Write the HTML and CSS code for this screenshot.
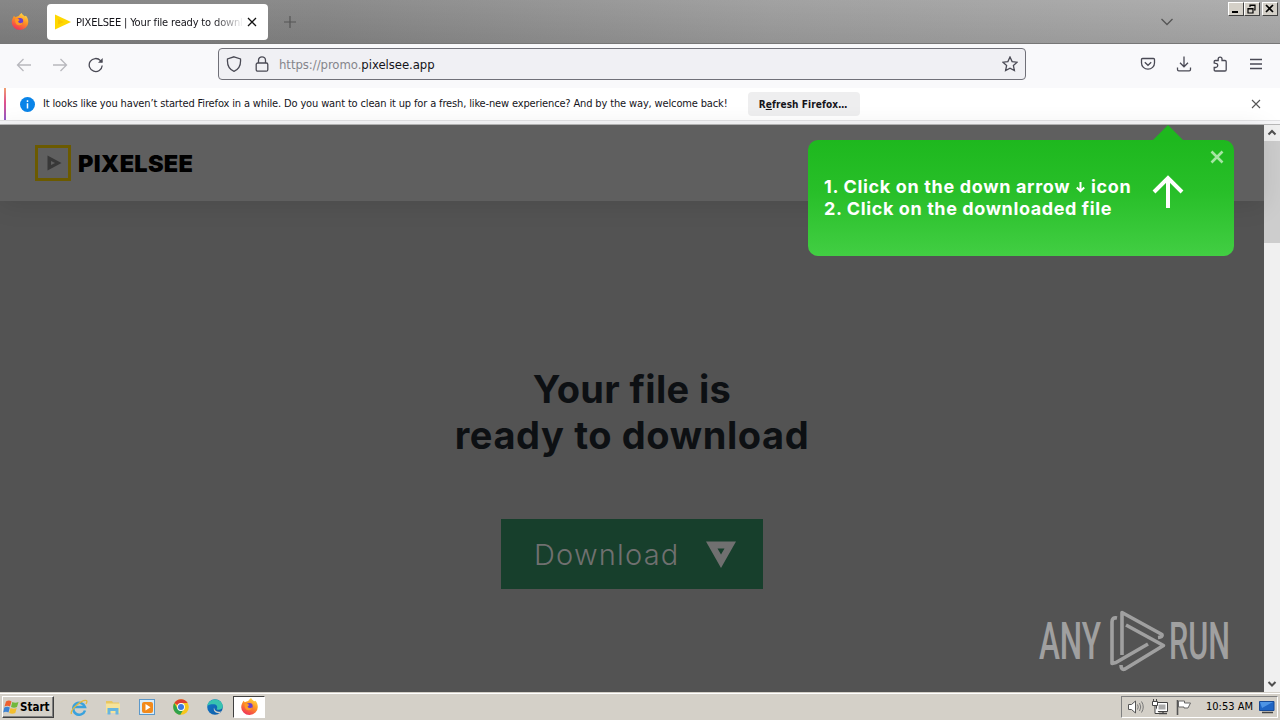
FILE: index.html
```html
<!DOCTYPE html>
<html lang="en">
<head>
  <meta charset="UTF-8">
  <title>PIXELSEE | Your file ready to download</title>
  <link rel="stylesheet" href="styles.css">
</head>
<body>

  <svg class="defs" width="0" height="0">
    <defs>
      <linearGradient id="foxBody" x1="0.8" y1="0" x2="0.3" y2="1">
        <stop offset="0" stop-color="#ffe04a"/>
        <stop offset="0.45" stop-color="#ff9422"/>
        <stop offset="1" stop-color="#f0305a"/>
      </linearGradient>
      <linearGradient id="edgeBody" x1="0" y1="0" x2="1" y2="1">
        <stop offset="0" stop-color="#1479c9"/>
        <stop offset="1" stop-color="#0c59a4"/>
      </linearGradient>
      <symbol id="firefox" viewBox="0 0 16 16">
        <path fill="url(#foxBody)" d="M1 5.2 2.3 2.6 3.6 4 5.2 3.4C6.6 3.2 7.4 2.6 8.2 1c.8-.6 1.2-.8 1.4-1 .4 1.4 1.6 2 2.8 3l1.2-.4c1.4 1.6 2.2 3.6 2.2 5.8A7.8 7.5 0 0 1 .2 8.600C.2 7.200.5 6.200 1 5.200z"/>
        <circle cx="8" cy="7.600" r="3" fill="#6a3fd0"/>
        <path fill="#ff9a24" d="M3.400 5.600C5 5 6.600 5.400 7.800 6.600L6.200 8c.6 1.800 3 2 4.600.8-.6 2.200-2.600 3.200-4.600 2.600C4.200 10.800 3 8.600 3.400 5.600z"/>
      </symbol>
    </defs>
  </svg>

  <!-- Tab strip -->
  <div class="tabstrip">
    <svg class="view-icon" width="18" height="17"><use href="#firefox"/></svg>
    <div class="tab">
      <svg width="16" height="16" viewBox="0 0 16 16"><path d="M0 .5 16 8 0 15.500z" fill="#ffd800"/><path d="M3 5l6 3-6 2.500z" fill="#fbc600"/></svg>
      <span class="tab-title">PIXELSEE | Your file ready to downl</span>
      <svg class="tab-close" width="10" height="10" viewBox="0 0 10 10"><path d="M1 1l8 8M9 1l-8 8" stroke="#111" stroke-width="1.300"/></svg>
    </div>
    <svg class="new-tab" width="12" height="12" viewBox="0 0 12 12"><path d="M6 0v12M0 6h12" stroke="#555" stroke-width="1.200"/></svg>
    <svg class="all-tabs" width="14" height="8" viewBox="0 0 14 8"><path d="M1.500 1l5.500 5.500L12.500 1" fill="none" stroke="#555" stroke-width="1.300"/></svg>
    <div class="window-buttons">
      <div class="winbtn"><svg width="10" height="10" viewBox="0 0 10 10"><path d="M1 8h6" stroke="#000" stroke-width="2"/></svg></div>
      <div class="winbtn"><svg width="10" height="10" viewBox="0 0 10 10"><path d="M3 3V1h5v5H7M3 1.500h5M1 4.500h5V9H1zM1 5h5" fill="none" stroke="#000" stroke-width="1.200"/></svg></div>
      <div class="winbtn close"><svg width="10" height="10" viewBox="0 0 10 10"><path d="M1 1l7 7M8 1L1 8" stroke="#000" stroke-width="1.700"/></svg></div>
    </div>
  </div>

  <!-- Toolbar -->
  <div class="toolbar">
    <div class="nav">
      <svg width="16" height="16" viewBox="0 0 16 16" class="dim"><path d="M15 8H1.500M7.500 2l-6 6 6 6"/></svg>
      <svg width="16" height="16" viewBox="0 0 16 16" class="dim"><path d="M1 8h13.500M8.500 2l6 6-6 6"/></svg>
      <svg width="16" height="16" viewBox="0 0 16 16"><path d="M14.200 8.500A6.500 6.500 0 1 1 12.500 3.600L14 5"/><path d="M14.700 1v4.800H10z" fill="#4a4a55" stroke="none"/></svg>
    </div>
    <div class="urlbar">
      <svg width="16" height="16" viewBox="0 0 16 16"><path d="M8 .8 14.500 3C15 9 12.500 13.500 8 15.300 3.500 13.500 1 9 1.500 3z"/></svg>
      <svg class="lock" width="14" height="16" viewBox="0 0 14 16"><rect x="1.200" y="7" width="11.600" height="8.200" rx="1.500"/><path d="M3.500 7V4.300a3.500 3.500 0 0 1 7 0V7"/></svg>
      <span class="url">https://promo.<b>pixelsee.app</b></span>
      <svg class="star" width="16" height="16" viewBox="0 0 16 16"><path d="M8 1l2.100 4.600 5 .6-3.700 3.400 1 5L8 12.200l-4.400 2.400 1-5L.9 6.200l5-.6z"/></svg>
    </div>
    <div class="actions">
      <svg width="16" height="16" viewBox="0 0 16 16"><path d="M2.500 2.500h11a1 1 0 0 1 1 1V7a6.500 6.200 0 0 1-13 0V3.500a1 1 0 0 1 1-1z"/><path d="M4.800 6.300 8 9.300l3.200-3"/></svg>
      <svg width="16" height="16" viewBox="0 0 16 16"><path d="M8 .5v10M4 6.800l4 4 4-4M1.500 11.500v2q0 1.300 1.300 1.300h10.400q1.300 0 1.300-1.300v-2"/></svg>
      <svg width="16" height="16" viewBox="0 0 16 16"><path d="M2.200 7V5.500q0-1 1-1h3V3a1.900 1.900 0 0 1 3.800 0v1.500h3q1.200 0 1.200 1.200v8q0 1.300-1.200 1.300H3.400q-1.200 0-1.200-1.200V11.500h1.400a2.100 2.100 0 0 0 0-4.200z"/></svg>
      <svg width="16" height="16" viewBox="0 0 16 16"><path d="M2 3.500h12M2 8h12M2 12.500h12"/></svg>
    </div>
  </div>

  <!-- Notification bar -->
  <div class="notification">
    <svg class="info" width="15" height="15" viewBox="0 0 15 15"><circle cx="7.500" cy="7.500" r="7.500" fill="#0a84e8"/><path d="M7.500 3.300v1.600M7.500 6.200v5.300" stroke="#fff" stroke-width="1.500"/></svg>
    <span class="message">It looks like you haven’t started Firefox in a while. Do you want to clean it up for a fresh, like-new experience? And by the way, welcome back!</span>
    <span class="refresh">R<u>e</u>fresh Firefox…</span>
    <svg class="dismiss" width="10" height="10" viewBox="0 0 10 10"><path d="M1 1l8 8M9 1L1 9" stroke="#555" stroke-width="1.100"/></svg>
  </div>

  <!-- Page -->
  <div class="viewport">
    <div class="page">
      <div class="site-header">
        <svg width="36" height="36" viewBox="0 0 36 36"><rect x="1.500" y="1.500" width="33" height="33" fill="none" stroke="#6b5a00" stroke-width="3"/><path d="M12.500 10.500v15L26.500 18zM16 16l4 2-4 2z" fill="#383838" fill-rule="evenodd"/></svg>
        <span class="brand">PIXELSEE</span>
      </div>
      <div class="hero">
        <h1><span class="line-one">Your file is</span><br>ready to download</h1>
        <div class="download">
          <span>Download</span>
          <svg width="30" height="27" viewBox="0 0 30 27"><path d="M0 .5h30L15 27zM11.500 7.500l3.500 6 3.500-6z" fill="#707070" fill-rule="evenodd"/></svg>
        </div>
      </div>

      <div class="hint">
        <div class="hint-text"><span class="step-one">1. Click on the down arrow <svg width="9" height="11" viewBox="0 0 9 11"><path d="M4.500 0v9M.8 5.500l3.700 3.700 3.700-3.700" fill="none" stroke="#fff" stroke-width="2"/></svg> icon</span><br>2. Click on the downloaded file</div>
        <svg class="hint-arrow" width="32" height="34" viewBox="0 0 32 34"><path d="M16 33V3M2 17 16 3l14 14" fill="none" stroke="#fff" stroke-width="4"/></svg>
        <svg class="hint-close" width="14" height="14" viewBox="0 0 14 14"><path d="M1.500 1.500l11 11M12.500 1.500l-11 11" stroke="#a5e6a3" stroke-width="2.600"/></svg>
      </div>

      <svg class="watermark" width="212" height="72" viewBox="0 0 212 72">
        <text x="2" y="50" textLength="62" lengthAdjust="spacingAndGlyphs">ANY</text>
        <text x="132" y="50" textLength="61" lengthAdjust="spacingAndGlyphs">RUN</text>
        <g fill="none" stroke="#a0a0a0" stroke-width="3.600" stroke-linejoin="round">
          <path d="M80 9q-5-1-5 4v41.500l4-1L111 35"/>
          <path d="M85 46V3.500L125 25.500q1 2.500-4 3"/>
          <path d="M89 16l37.500 20.500L88 60q-4 1.500-4-4"/>
        </g>
      </svg>
    </div>

    <div class="scrollbar">
      <svg width="16" height="16" viewBox="0 0 16 16"><path d="M4.500 9.500 8 6l3.500 3.500" fill="none" stroke="#505050" stroke-width="2"/></svg>
      <div class="thumb"></div>
      <svg width="16" height="16" viewBox="0 0 16 16"><path d="M4.500 6 8 9.500 11.500 6" fill="none" stroke="#505050" stroke-width="2"/></svg>
    </div>
  </div>

  <!-- Taskbar -->
  <div class="taskbar">
    <div class="start">
      <svg width="17" height="16" viewBox="0 0 17 16">
        <path d="M3 2.500q3-2 5.500 0L7 7.500q-2.500-1.500-5.500 0z" fill="#ee6030"/>
        <path d="M9.300 3q3 1.500 6.200 0L14 8q-3 1.500-6 0z" fill="#72b83c"/>
        <path d="M1.300 8.500q3-1.500 5.500 0L5.500 13.500q-2.500-1.500-5.300 0z" fill="#3d83d3"/>
        <path d="M7.500 9q3 1.500 6.200 0l-1.400 5q-3 1.500-6.200 0z" fill="#f3be2f"/>
      </svg>
      <span>Start</span>
    </div>
    <div class="apps">
      <svg width="18" height="18" viewBox="0 0 18 18"><path d="M15 12.500A6 6 0 1 1 15 9H4" fill="none" stroke="#3aa2dd" stroke-width="2.500"/><path d="M1.500 16C-.5 12 12 1 16.500 2.500q1 1-.5 3.500" fill="none" stroke="#e4b93c" stroke-width="1.300"/></svg>
      <svg width="18" height="18" viewBox="0 0 18 18"><path d="M2 3h6l1 1.500h6V8H2z" fill="#e8c660"/><path d="M2 5.500h14V15H2z" fill="#f6e39a"/><path d="M3.500 16.500V10h11v6.500h-3V13h-5v3.500z" fill="#68b6df"/></svg>
      <svg width="18" height="18" viewBox="0 0 18 18"><rect x="1.500" y="1.500" width="15" height="15" fill="#d8ecfa" stroke="#5c98c9"/><rect x="4" y="4" width="11" height="11" rx="2" fill="#f28a1c"/><path d="M7.500 6v6.500L12.500 9.300z" fill="#fff"/></svg>
      <svg width="18" height="18" viewBox="0 0 18 18"><circle cx="9" cy="9" r="7.800" fill="#f7c61b"/><path d="M9 9 2.300 5A7.800 7.800 0 0 1 15.700 5H9z" fill="#dc3e32"/><path d="M2.300 5A7.800 7.800 0 0 0 8.300 16.800L12 10.500 9 9 5.600 10.700z" fill="#2fa24c"/><circle cx="9" cy="9" r="3.900" fill="#fff"/><circle cx="9" cy="9" r="3" fill="#3c79e0"/></svg>
      <svg width="18" height="18" viewBox="0 0 18 18"><circle cx="9" cy="9" r="7.800" fill="url(#edgeBody)"/><path d="M1.300 8C2.500-.5 15.500-1 16.800 8c0 3.500-3.500 4.500-6.300 3.200 1.600-2 .5-4.700-2.500-5C5 6 2.500 6.500 1.300 8z" fill="#37c3b0"/><path d="M8 9.500c.5 4 4.500 5 7.500 3.700-.7.9-1.500 1.600-2 2C9.500 15.500 7 13 8 9.500z" fill="#d4d0c8"/></svg>
      <div class="app-active"><svg width="17" height="17"><use href="#firefox"/></svg></div>
    </div>
    <div class="tray">
      <svg width="18" height="18" viewBox="0 0 18 18"><path d="M1.500 6.500h3L8.500 3v12L4.500 11.500h-3z" fill="#fff" stroke="#555"/><path d="M10.500 6.500q1.500 2.500 0 5M12.500 5q2.500 4 0 8M14.500 3.500q3.500 5.500 0 11" fill="none" stroke="#777"/></svg>
      <svg width="18" height="18" viewBox="0 0 18 18"><path d="M5.500 4.500h11v9h-11z" fill="#fff" stroke="#444"/><path d="M7.500 6.500h7v5h-7z" fill="#aaa"/><path d="M8 15.500h8M12 13.500v2" stroke="#444" stroke-width="1.300"/><path d="M1.500 3.500h5v4h-5zM4 8v7.500h4M2.500 1v2.500M5.500 1v2.500" fill="#fff" stroke="#444"/></svg>
      <svg width="18" height="18" viewBox="0 0 18 18"><path d="M2.500 2v15" stroke="#555" stroke-width="1.600"/><path d="M3.500 3h6v2h6l-2.500 5H9V9H3.500z" fill="#fff" stroke="#666"/></svg>
      <span class="clock">10:53 AM</span>
      <svg class="desktop" width="16" height="14" viewBox="0 0 16 14"><path d="M.5 1.500h14.500v9H.5z" fill="#1f65c4" stroke="#174a96"/><path d="M1 2h13L3 8z" fill="#4d94e5"/><path d="M3 12.500h11" stroke="#444" stroke-width="1.500"/></svg>
    </div>
  </div>

</body>
</html>
```
FILE: styles.css
```css
* {
  box-sizing: border-box;
}
body {
  margin: 0;
  width: 1280px;
  height: 720px;
  overflow: hidden;
  display: flex;
  flex-direction: column;
  font-family: "DejaVu Sans Condensed", "DejaVu Sans", sans-serif;
  font-stretch: condensed;
  font-size: 11px;
  color: #15141a;
  background: #f9f9fb;
}
svg {
  display: block;
  flex: none;
}
.defs {
  position: absolute;
}

/* tab strip */
.tabstrip {
  position: relative;
  flex: none;
  height: 44px;
  display: flex;
  align-items: center;
  padding-left: 11px;
  background: linear-gradient(rgba(255,255,255,0.06), rgba(0,0,0,0.06)), linear-gradient(90deg, #808080, #848484 25%, #9c9c9c 60%, #aaa);
  border-bottom: 1px solid #777;
}
.tab {
  width: 221px;
  height: 36px;
  margin-left: 18px;
  padding: 0 11px 0 8px;
  display: flex;
  align-items: center;
  background: #fff;
  border-radius: 4px;
}
.tab-title {
  width: 168px;
  margin: 2px 3px 0 5px;
  flex: none;
  overflow: hidden;
  white-space: nowrap;
  letter-spacing: -0.15px;
  -webkit-mask-image: linear-gradient(90deg, #000 82%, transparent);
  mask-image: linear-gradient(90deg, #000 82%, transparent);
}
.new-tab {
  margin-left: 16px;
}
.all-tabs {
  margin-left: auto;
  margin-right: 106px;
}
.window-buttons {
  position: absolute;
  top: 2px;
  right: 2px;
  display: flex;
}
.winbtn {
  width: 16px;
  height: 14px;
  padding: 1px 2px;
  background: #d4d0c8;
  border: 1px solid;
  border-color: #fff #404040 #404040 #fff;
}
.winbtn.close {
  margin-left: 2px;
}

/* toolbar */
.toolbar {
  flex: none;
  height: 44px;
  display: flex;
  align-items: center;
  padding: 0 16px;
  padding-bottom: 4px;
  background: #f9f9fb;
}
.toolbar svg {
  fill: none;
  stroke: #4a4a55;
  stroke-width: 1.3;
}
.toolbar svg.dim {
  stroke: #b8b8bd;
}
.nav {
  display: flex;
  gap: 20px;
  width: 202px;
  padding-top: 2px;
}
.urlbar {
  width: 808px;
  height: 32px;
  display: flex;
  align-items: center;
  padding: 0 7px;
  background: #f0f0f4;
  border: 1px solid #707078;
  border-radius: 4px;
}
.lock {
  margin-left: 13px;
}
.url {
  margin-left: 10px;
  font-size: 13px;
  letter-spacing: -0.05px;
  color: #85858b;
}
.url b {
  font-weight: normal;
  color: #15141a;
}
.star {
  margin-left: auto;
}
.actions {
  display: flex;
  gap: 20px;
  margin-left: auto;
}

/* notification bar */
.notification {
  flex: none;
  height: 37px;
  display: flex;
  align-items: center;
  padding: 0 19px 5px 20px;
  background: linear-gradient(#fff 32px, #e2e2e4 32px, #e2e2e4 33px, #f6f6f8 33px, #f6f6f8 36px, #b8b8b8 36px);
  position: relative;
}
.notification::before {
  content: "";
  position: absolute;
  left: 4px;
  top: 0;
  width: 2px;
  height: 32px;
  background: linear-gradient(#f0a070, #e0508c 45%, #9059c8);
}
.message {
  width: 685px;
  margin-left: 8px;
  padding-bottom: 1px;
  white-space: nowrap;
  letter-spacing: -0.145px;
}
.refresh {
  width: 112px;
  height: 24px;
  margin-left: 20px;
  padding-right: 2px;
  line-height: 25px;
  text-align: center;
  font-size: 10px;
  font-weight: bold;
  letter-spacing: 0.1px;
  background: #eeeeef;
  border-radius: 4px;
}
.dismiss {
  margin-left: auto;
}

/* web page */
.viewport {
  flex: 1;
  min-height: 0;
  display: flex;
}
.page {
  position: relative;
  width: 1264px;
  background: #535353;
  font-family: Inter, "Open Sans", sans-serif;
  font-stretch: normal;
}
.site-header {
  height: 76px;
  padding-left: 35px;
  display: flex;
  align-items: center;
  gap: 7px;
  background: #5f5f5f;
  box-shadow: 0 4px 24px rgba(0,0,0,0.1);
}
.brand {
  padding-top: 1px;
  font-size: 23.5px;
  font-weight: 900;
  letter-spacing: 0.3px;
  color: #000;
}
.hero {
  display: flex;
  flex-direction: column;
  align-items: center;
}
h1 {
  margin: 165px 0 0;
  font-size: 38px;
  line-height: 46px;
  font-weight: bold;
  letter-spacing: 0.6px;
  text-align: center;
  white-space: nowrap;
  color: #0d1013;
}
.line-one {
  letter-spacing: 0.35px;
}
.download {
  width: 262px;
  height: 70px;
  margin-top: 61px;
  padding: 0 27px 0 33px;
  display: flex;
  align-items: center;
  justify-content: space-between;
  background: #173f2c;
  color: #707070;
  font-size: 29px;
  font-weight: 300;
  letter-spacing: 1.2px;
}

/* green popup */
.hint {
  position: absolute;
  left: 808px;
  top: 15px;
  width: 426px;
  height: 116px;
  padding: 35px 0 0 16px;
  display: flex;
  border-radius: 10px;
  background: linear-gradient(#1eb81e, #28bf29 45%, #42ce43);
  color: #fff;
}
.hint::before {
  content: "";
  position: absolute;
  left: 344px;
  top: -15px;
  border: 16px solid transparent;
  border-top: 0;
  border-bottom: 16px solid #1eb81e;
}
.hint-text {
  width: 328px;
  padding-top: 1px;
  font-size: 18px;
  line-height: 22px;
  font-weight: bold;
  letter-spacing: 0.6px;
  white-space: nowrap;
}
.step-one {
  letter-spacing: 0.66px;
}
.hint-text svg {
  display: inline-block;
  margin: 0 1px;
}
.hint-close {
  position: absolute;
  right: 10px;
  top: 10px;
}
.watermark {
  position: absolute;
  left: 1037px;
  top: 484px;
}
.watermark text {
  font-family: Roboto, sans-serif;
  font-size: 52px;
  font-weight: 500;
  fill: #a0a0a0;
}

/* scrollbar */
.scrollbar {
  width: 16px;
  display: flex;
  flex-direction: column;
  background: #f0f0f0;
}
.thumb {
  height: 102px;
  margin-bottom: auto;
  background: #cdcdcd;
}

/* taskbar */
.taskbar {
  flex: none;
  height: 28px;
  display: flex;
  align-items: center;
  padding: 1px 2px 1px 2px;
  background: #d4d0c8;
  border-top: 1px solid #d4d0c8;
  box-shadow: inset 0 1px #fff;
}
.start {
  width: 52px;
  height: 22px;
  display: flex;
  align-items: center;
  font-weight: bold;
  font-size: 11.5px;
  color: #000;
  border: 1px solid;
  border-color: #fff #404040 #404040 #fff;
  box-shadow: inset -1px -1px #808080;
}
.apps {
  display: flex;
  align-items: center;
  gap: 16px;
  margin-left: 16px;
}
.app-active {
  width: 32px;
  height: 22px;
  margin-left: -7px;
  display: flex;
  align-items: center;
  justify-content: center;
  background: #fff;
  border: 1px solid;
  border-color: #404040 #fff #fff #404040;
}
.tray {
  width: 157px;
  height: 22px;
  margin-left: auto;
  padding-left: 5px;
  display: flex;
  align-items: center;
  gap: 6px;
  border: 1px solid;
  border-color: #808080 #fff #fff #808080;
}
.clock {
  width: 47px;
  margin-left: 7px;
  white-space: nowrap;
  color: #000;
}
```
